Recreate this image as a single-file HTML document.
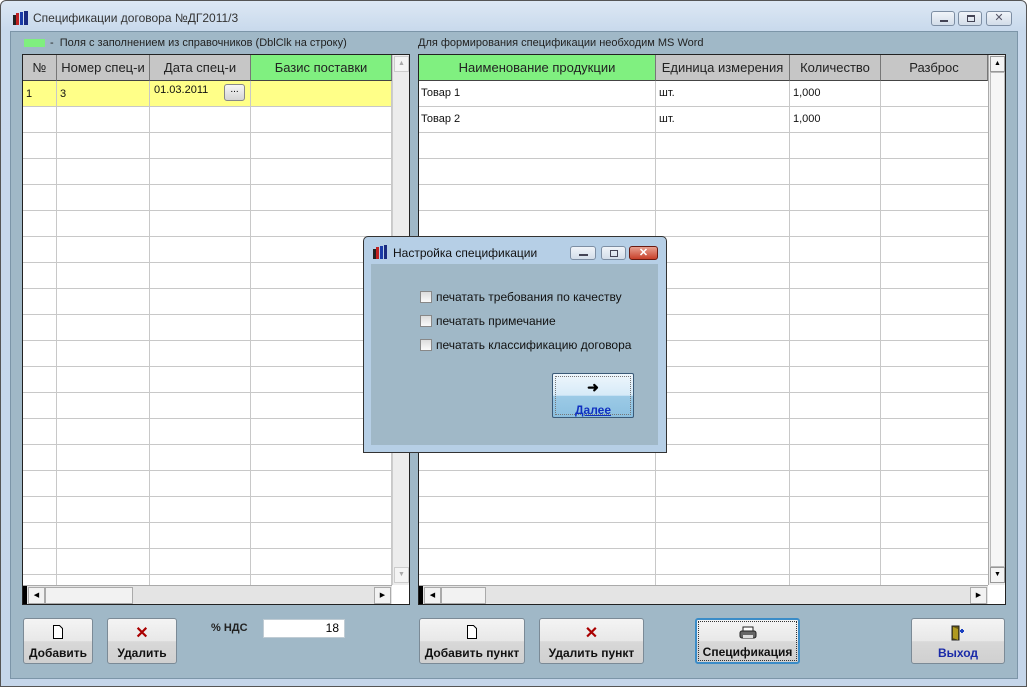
<!DOCTYPE html>
<html><head><meta charset="utf-8"><style>
*{box-sizing:border-box;margin:0;padding:0}
body{width:1027px;height:687px;overflow:hidden;font-family:"Liberation Sans",sans-serif;font-size:11px;background:#fff;position:relative}
.a{position:absolute}
.win{left:0;top:0;width:1027px;height:687px;border:1px solid #555;border-radius:6px 6px 0 0;background:linear-gradient(#dde8f4,#c8d9ec 30px,#c5d6ea)}
.client{left:10px;top:31px;width:1008px;height:648px;background:#a0b8c7;border:1px solid #7c95a8}
.grid{background:#fff;border:1px solid #222;overflow:hidden}
.hd{position:absolute;top:0;height:26px;background:#c6c6c6;border-right:1px solid #777;border-bottom:1px solid #444;font-size:13px;text-align:center;line-height:25px;color:#222}
.vl{position:absolute;width:1px;background:#c8c8c8}
.hl{position:absolute;height:1px;background:#c8c8c8}
.cell{position:absolute;font-size:11px;color:#111}
.btn{position:absolute;border:1px solid #7b8a96;border-radius:3px;background:linear-gradient(#f4f4f4,#e8e8e8 50%,#d8d8d8 51%,#d0d0d0);font-weight:bold;font-size:12px;text-align:center;color:#111}
.btn .ic{position:absolute;left:0;right:0;top:6px;height:16px}
.btn .t{position:absolute;left:0;right:0;bottom:3px}
.sb{position:absolute;background:#e8e8e8}
.cb{display:inline-block;width:12px;height:12px;border:1px solid #888;background:linear-gradient(#ddd,#fafafa);vertical-align:-2px;margin-right:4px}
.tbb{position:absolute;top:11px;width:24px;height:15px;border:1px solid #7d8ea3;border-radius:3px;background:linear-gradient(#f0f4f9,#d3dde9)}
</style></head><body>
<div class="a win"></div>
<!-- title -->
<svg class="a" style="left:12px;top:10px" width="18" height="16"><rect x="1" y="5" width="3" height="10" fill="#222"/><rect x="4" y="3" width="3" height="12" fill="#c02020"/><rect x="8" y="2" width="3" height="13" fill="#1a3aa8"/><rect x="12" y="1" width="4" height="14" fill="#1a2a80"/></svg>
<div class="a" style="left:33px;top:11px;font-size:12px;color:#333">Спецификации договора №ДГ2011/3</div>
<div class="tbb" style="left:931px"><div class="a" style="left:8px;top:8px;width:8px;height:2px;background:#445"></div></div>
<div class="tbb" style="left:958px"><div class="a" style="left:8px;top:3px;width:8px;height:7px;border:1px solid #445;border-top-width:2px"></div></div>
<div class="tbb" style="left:986px;width:26px;text-align:center;font-size:11px;line-height:13px;color:#556">✕</div>
<div class="a client"></div>
<!-- legend -->
<div class="a" style="left:24px;top:39px;width:21px;height:8px;background:#7fef7f"></div>
<div class="a" style="left:50px;top:37px;color:#222">-&nbsp; Поля с заполнением из справочников (DblClk на строку)</div>
<div class="a" style="left:418px;top:37px;color:#222">Для формирования спецификации необходим MS Word</div>

<!-- left grid -->
<div class="a grid" style="left:22px;top:54px;width:388px;height:551px">
 <div class="a" style="left:0;top:26px;width:369px;height:26px;background:#ffff88"></div>
 <div class="hd" style="left:0;width:34px">№</div>
 <div class="hd" style="left:34px;width:93px">Номер спец-и</div>
 <div class="hd" style="left:127px;width:101px">Дата спец-и</div>
 <div class="hd" style="left:228px;width:141px;background:#80f080">Базис поставки</div>
 <div class="vl" style="left:33px;top:26px;height:504px"></div>
 <div class="vl" style="left:126px;top:26px;height:504px"></div>
 <div class="vl" style="left:227px;top:26px;height:504px"></div>
 <div class="vl" style="left:368px;top:26px;height:504px"></div>
 <div id="lrows"></div>
 <div class="cell" style="left:3px;top:33px">1</div>
 <div class="cell" style="left:37px;top:33px">3</div>
 <div class="cell" style="left:131px;top:29px">01.03.2011</div>
 <div class="a" style="left:201px;top:29px;width:21px;height:17px;border:1px solid #888;border-radius:3px;background:linear-gradient(#f6f6f6,#d4d4d4);font-size:10px;text-align:center;line-height:10px">...</div>
 <div class="sb" style="left:369px;top:0;width:17px;height:530px;background:#ececec;border-left:1px solid #ccc"><div class="a" style="left:1px;top:1px;width:15px;height:16px;background:#f4f4f4;border:1px solid #ccc;font-size:7px;color:#aaa;text-align:center;line-height:14px">▲</div><div class="a" style="left:1px;top:512px;width:15px;height:16px;background:#f4f4f4;border:1px solid #ccc;font-size:7px;color:#aaa;text-align:center;line-height:14px">▼</div></div>
 <div class="sb" style="left:0;top:530px;width:369px;height:20px;background:#e4e4e4;border-top:1px solid #aaa"><div class="a" style="left:0;top:0;width:4px;height:19px;background:#000"></div><div class="a" style="left:5px;top:1px;width:17px;height:17px;background:#f2f2f2;border:1px solid #aaa;font-size:7px;text-align:center;line-height:15px">◀</div><div class="a" style="left:22px;top:1px;width:88px;height:17px;background:#f2f2f2;border:1px solid #aaa"></div><div class="a" style="left:351px;top:1px;width:17px;height:17px;background:#f2f2f2;border:1px solid #aaa;font-size:7px;text-align:center;line-height:15px">▶</div></div>
</div>

<!-- right grid -->
<div class="a grid" style="left:418px;top:54px;width:588px;height:551px">
 <div class="hd" style="left:0;width:237px;background:#80f080">Наименование продукции</div>
 <div class="hd" style="left:237px;width:134px">Единица измерения</div>
 <div class="hd" style="left:371px;width:91px">Количество</div>
 <div class="hd" style="left:462px;width:107px">Разброс</div>
 <div class="vl" style="left:236px;top:26px;height:504px"></div>
 <div class="vl" style="left:370px;top:26px;height:504px"></div>
 <div class="vl" style="left:461px;top:26px;height:504px"></div>
 <div id="rrows"></div>
 <div class="cell" style="left:2px;top:32px">Товар 1</div><div class="cell" style="left:240px;top:32px">шт.</div><div class="cell" style="left:374px;top:32px">1,000</div>
 <div class="cell" style="left:2px;top:58px">Товар 2</div><div class="cell" style="left:240px;top:58px">шт.</div><div class="cell" style="left:374px;top:58px">1,000</div>
 <div class="sb" style="left:569px;top:0;width:17px;height:530px;background:#ececec;border-left:1px solid #aaa"><div class="a" style="left:1px;top:1px;width:15px;height:16px;background:#f4f4f4;border:1px solid #999;font-size:7px;text-align:center;line-height:14px">▲</div><div class="a" style="left:1px;top:17px;width:15px;height:495px;background:#f6f6f6;border:1px solid #bbb"></div><div class="a" style="left:1px;top:512px;width:15px;height:16px;background:#f4f4f4;border:1px solid #999;font-size:7px;text-align:center;line-height:14px">▼</div></div>
 <div class="sb" style="left:0;top:530px;width:569px;height:20px;background:#e4e4e4;border-top:1px solid #aaa"><div class="a" style="left:0;top:0;width:4px;height:19px;background:#000"></div><div class="a" style="left:5px;top:1px;width:17px;height:17px;background:#f2f2f2;border:1px solid #aaa;font-size:7px;text-align:center;line-height:15px">◀</div><div class="a" style="left:22px;top:1px;width:45px;height:17px;background:#f2f2f2;border:1px solid #aaa"></div><div class="a" style="left:551px;top:1px;width:17px;height:17px;background:#f2f2f2;border:1px solid #aaa;font-size:7px;text-align:center;line-height:15px">▶</div></div>
</div>

<!-- bottom buttons -->
<div class="btn" style="left:23px;top:618px;width:70px;height:46px"><div class="ic"><svg width="12" height="14"><path d="M1.5 .5h6l3 3v10h-9z" fill="#fff" stroke="#000"/></svg></div><div class="t">Добавить</div></div>
<div class="btn" style="left:107px;top:618px;width:70px;height:46px"><div class="ic" style="color:#a00;font-size:16px;top:4px">✕</div><div class="t">Удалить</div></div>
<div class="a" style="left:211px;top:622px;font-weight:bold;font-size:11px;color:#222">% НДС</div>
<div class="a" style="left:263px;top:619px;width:82px;height:19px;background:#fff;border:1px solid #c0ccd4;text-align:right;padding-right:5px;font-size:12px;line-height:17px">18</div>
<div class="btn" style="left:419px;top:618px;width:106px;height:46px"><div class="ic"><svg width="12" height="14"><path d="M1.5 .5h6l3 3v10h-9z" fill="#fff" stroke="#000"/></svg></div><div class="t">Добавить пункт</div></div>
<div class="btn" style="left:539px;top:618px;width:105px;height:46px"><div class="ic" style="color:#a00;font-size:16px;top:4px">✕</div><div class="t">Удалить пункт</div></div>
<div class="btn" style="left:695px;top:618px;width:105px;height:46px;border:2px solid #3a8cc8"><div class="a" style="left:1px;top:1px;right:1px;bottom:1px;border:1px dotted #333"></div><div class="ic"><svg width="18" height="14"><rect x="4" y="1" width="10" height="5" fill="#fff" stroke="#222"/><rect x="1" y="5" width="16" height="7" rx="2" fill="#666" stroke="#222"/><rect x="4" y="9" width="10" height="3" fill="#ddd"/></svg></div><div class="t">Спецификация</div></div>
<div class="btn" style="left:911px;top:618px;width:94px;height:46px"><div class="ic"><svg width="16" height="16"><rect x="2" y="1" width="7" height="14" fill="#6a5a10" stroke="#222"/><path d="M3 2l5 2v11l-5-2z" fill="#b09a20"/><path d="M10 6h4M12 4v4" stroke="#1a40c0" stroke-width="2"/></svg></div><div class="t" style="color:#1a2aa8">Выход</div></div>

<!-- dialog -->
<div class="a" style="left:363px;top:236px;width:304px;height:217px;border:1px solid #333;border-radius:5px 5px 0 0;background:#b6cfe6"></div>
<svg class="a" style="left:372px;top:245px" width="16" height="14"><rect x="1" y="4" width="3" height="10" fill="#222"/><rect x="4" y="2" width="3" height="12" fill="#c02020"/><rect x="8" y="1" width="3" height="13" fill="#1a3aa8"/><rect x="12" y="0" width="3" height="14" fill="#1a2a80"/></svg>
<div class="a" style="left:393px;top:246px;font-size:12px;color:#111">Настройка спецификации</div>
<div class="tbb" style="left:570px;top:246px;width:26px;height:14px"><div class="a" style="left:8px;top:7px;width:9px;height:2px;background:#445"></div></div>
<div class="tbb" style="left:601px;top:246px;width:25px;height:14px"><div class="a" style="left:8px;top:3px;width:8px;height:7px;border:1px solid #445"></div></div>
<div class="a" style="left:629px;top:246px;width:29px;height:14px;border:1px solid #6a1a10;border-radius:3px;background:linear-gradient(#e8a090,#c8402a);color:#fff;font-weight:bold;font-size:11px;text-align:center;line-height:12px">✕</div>
<div class="a" style="left:371px;top:264px;width:287px;height:181px;background:#a0b8c7"></div>
<div class="a" style="left:420px;top:290px;font-size:12px;color:#111"><span class="cb"></span>печатать требования по качеству</div>
<div class="a" style="left:420px;top:314px;font-size:12px;color:#111"><span class="cb"></span>печатать примечание</div>
<div class="a" style="left:420px;top:338px;font-size:12px;color:#111"><span class="cb"></span>печатать классификацию договора</div>
<div class="a" style="left:552px;top:373px;width:82px;height:45px;border:1px solid #3a5a78;border-radius:2px;background:linear-gradient(#eef6fc,#d6eaf8 50%,#9ccae6 51%,#8cc0e0)"><div class="a" style="left:2px;top:2px;right:2px;bottom:2px;border:1px dotted #777"></div><div class="a" style="left:0;right:0;top:5px;text-align:center;font-size:14px;font-weight:bold">➜</div><div class="a" style="left:0;right:0;top:29px;text-align:center;font-size:12px;font-weight:bold;color:#1030c0;text-decoration:underline">Далее</div></div>

<script>
var l='',r='';
for(var y=52;y<530;y+=26){l+='<div class="hl" style="left:0;top:'+(y-1)+'px;width:369px"></div>';r+='<div class="hl" style="left:0;top:'+(y-1)+'px;width:569px"></div>';}
document.getElementById('lrows').innerHTML=l;document.getElementById('rrows').innerHTML=r;
</script>
</body></html>
